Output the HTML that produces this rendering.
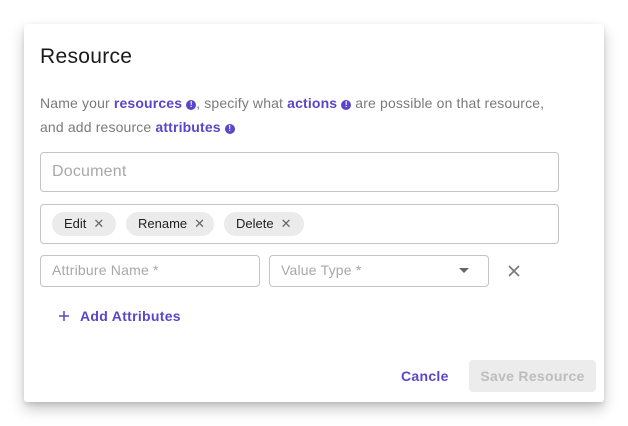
<!DOCTYPE html>
<html><head><style>
body{margin:0;width:628px;height:426px;background:#fff;font-family:"Liberation Sans",sans-serif;position:relative;overflow:hidden}
.card{position:absolute;left:24px;top:24px;width:580px;height:378px;background:#fff;border-radius:3px;box-shadow:0 7px 14px rgba(0,0,0,.22),0 2px 4px rgba(0,0,0,.1)}
.a{position:absolute}
h1{position:absolute;left:40px;top:45px;margin:0;font-size:21px;font-weight:normal;color:#1a1a1a;letter-spacing:0.3px}
.d{position:absolute;left:40px;font-size:14px;color:#7a7a7a;white-space:nowrap;letter-spacing:0.15px}
.d b{color:#5b45c8}
.i{display:inline-block;width:10px;height:10px;border-radius:50%;background:#5b45c8;color:#fff;font-size:8px;line-height:10px;text-align:center;font-weight:bold;vertical-align:1px;letter-spacing:0}
.box{position:absolute;border:1px solid #c4c4c4;border-radius:4px;box-sizing:border-box}
.ph{position:absolute;color:#a8a8a8;font-size:15px;letter-spacing:0.2px}
.chip{position:absolute;top:212px;height:24px;border-radius:12px;background:#ebebeb;font-size:13px;color:#222;line-height:24px;padding-left:12px;box-sizing:border-box}
.chip span{color:#666;margin-left:7px}
</style></head><body>
<div class="card"></div>
<h1>Resource</h1>
<div class="d" style="top:95px">Name your <b>resources</b> <span class="i">!</span>, specify what <b>actions</b> <span class="i">!</span> are possible on that resource,</div>
<div class="d" style="top:119px">and add resource <b>attributes</b> <span class="i">!</span></div>
<div class="box" style="left:40px;top:152px;width:519px;height:40px"></div>
<div class="ph" style="left:52px;top:163px;font-size:16px">Document</div>
<div class="box" style="left:40px;top:204px;width:519px;height:40px"></div>
<div class="chip" style="left:52px;width:64px">Edit<span>✕</span></div>
<div class="chip" style="left:126px;width:88px">Rename<span>✕</span></div>
<div class="chip" style="left:224px;width:80px">Delete<span>✕</span></div>
<div class="box" style="left:40px;top:255px;width:220px;height:32px"></div>
<div class="ph" style="left:52px;top:262px;font-size:14px">Attribure Name *</div>
<div class="box" style="left:269px;top:255px;width:220px;height:32px"></div>
<div class="ph" style="left:281px;top:262px;font-size:14px">Value Type *</div>
<div class="a" style="left:459px;top:268px;width:0;height:0;border-left:5px solid transparent;border-right:5px solid transparent;border-top:5px solid #666"></div>
<svg class="a" style="left:507px;top:264px" width="14" height="14"><path d="M2 2L12 12M12 2L2 12" stroke="#777" stroke-width="1.6"/></svg>
<svg class="a" style="left:58px;top:310px" width="12" height="12"><path d="M6 1V11M1 6H11" stroke="#5b45c8" stroke-width="1.5"/></svg>
<div class="a" style="left:80px;top:308px;font-size:14px;font-weight:bold;color:#5b45c8;letter-spacing:0.3px">Add Attributes</div>
<div class="a" style="left:401px;top:368px;font-size:14px;font-weight:bold;color:#5b45c8;letter-spacing:0.3px">Cancle</div>
<div class="a" style="left:469px;top:360px;width:127px;height:32px;background:#ececec;border-radius:4px;color:#bdbdbd;font-size:14px;font-weight:bold;text-align:center;line-height:32px;letter-spacing:0.3px">Save Resource</div>
</body></html>
